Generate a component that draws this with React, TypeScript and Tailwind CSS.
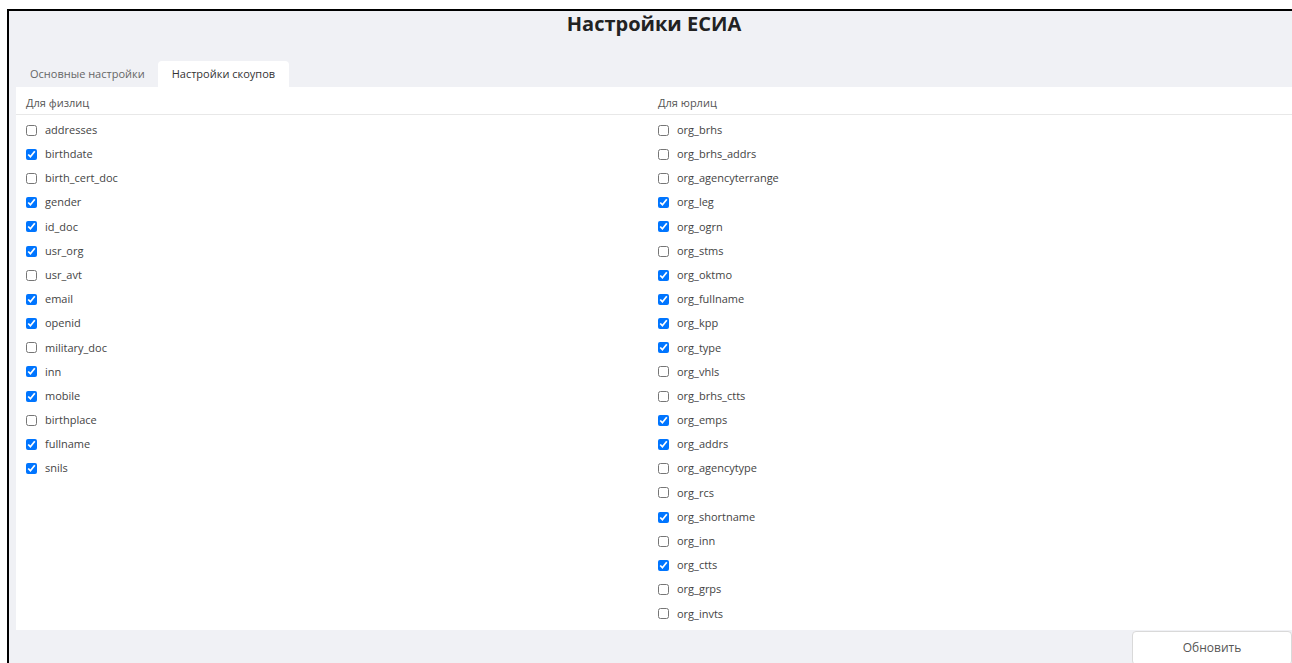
import { useState } from "react";

type Scope = { name: string; on: boolean };

const personScopes: Scope[] = [
  { name: "addresses", on: false },
  { name: "birthdate", on: true },
  { name: "birth_cert_doc", on: false },
  { name: "gender", on: true },
  { name: "id_doc", on: true },
  { name: "usr_org", on: true },
  { name: "usr_avt", on: false },
  { name: "email", on: true },
  { name: "openid", on: true },
  { name: "military_doc", on: false },
  { name: "inn", on: true },
  { name: "mobile", on: true },
  { name: "birthplace", on: false },
  { name: "fullname", on: true },
  { name: "snils", on: true },
];

const orgScopes: Scope[] = [
  { name: "org_brhs", on: false },
  { name: "org_brhs_addrs", on: false },
  { name: "org_agencyterrange", on: false },
  { name: "org_leg", on: true },
  { name: "org_ogrn", on: true },
  { name: "org_stms", on: false },
  { name: "org_oktmo", on: true },
  { name: "org_fullname", on: true },
  { name: "org_kpp", on: true },
  { name: "org_type", on: true },
  { name: "org_vhls", on: false },
  { name: "org_brhs_ctts", on: false },
  { name: "org_emps", on: true },
  { name: "org_addrs", on: true },
  { name: "org_agencytype", on: false },
  { name: "org_rcs", on: false },
  { name: "org_shortname", on: true },
  { name: "org_inn", on: false },
  { name: "org_ctts", on: true },
  { name: "org_grps", on: false },
  { name: "org_invts", on: false },
];

function ScopeList({ items }: { items: Scope[] }) {
  const [state, setState] = useState(items);
  return (
    <div className="flex flex-col pt-[3px]">
      {state.map((s, i) => (
        <label key={s.name} className="flex items-center h-[24.2px] gap-[8px] cursor-pointer">
          <input
            type="checkbox"
            checked={s.on}
            onChange={() =>
              setState(state.map((x, j) => (j === i ? { ...x, on: !x.on } : x)))
            }
            className="m-0 w-[11px] h-[11px] accent-[#0075ff]"
          />
          <span className="text-[11px] text-[#444]">{s.name}</span>
        </label>
      ))}
    </div>
  );
}

export default function App() {
  return (
    <div className="min-h-screen bg-white pl-[7px] pt-[9px] font-['Open_Sans',sans-serif]">
      <div className="h-[654px] border-l-2 border-t-2 border-black bg-[#f0f1f5] pl-[7px] flex flex-col">
        <h1 className="text-center text-[20px] leading-[26px] font-bold text-[#222] mb-[24px]">
          Настройки ЕСИА
        </h1>

        <div className="flex text-[11px] font-medium">
          <div className="pl-[14px] pr-[13px] h-[26px] flex items-center text-[#666]">Основные настройки</div>
          <div className="px-[14px] h-[26px] flex items-center text-[#333] bg-white rounded-t-[4px]">
            Настройки скоупов
          </div>
        </div>

        <div className="bg-white pb-[4px]">
          <div className="grid grid-cols-[632px_1fr] px-[10px] pt-[8px] pb-[3px] leading-[16px] border-b border-[#e8e8e8] text-[11px] font-medium text-[#555]">
            <div>Для физлиц</div>
            <div>Для юрлиц</div>
          </div>
          <div className="grid grid-cols-[632px_1fr] px-[10px]">
            <ScopeList items={personScopes} />
            <ScopeList items={orgScopes} />
          </div>
        </div>

        <div className="flex justify-end mt-[1px]">
          <button className="w-[160px] h-[34px] bg-white border border-[#d9d9d9] rounded-[4px] text-[12px] text-[#555]">
            Обновить
          </button>
        </div>
      </div>
    </div>
  );
}
